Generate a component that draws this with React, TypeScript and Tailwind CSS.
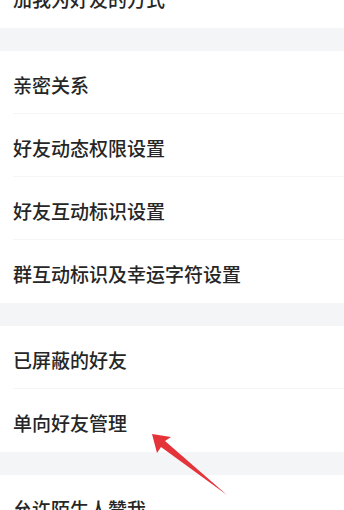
import React from 'react';

const groups: string[][] = [
  ['亲密关系', '好友动态权限设置', '好友互动标识设置', '群互动标识及幸运字符设置'],
  ['已屏蔽的好友', '单向好友管理'],
  ['允许陌生人赞我'],
];

function Row({ label, last }: { label: string; last?: boolean }) {
  return (
    <div className="relative flex h-[63px] items-center pl-[13px] pt-[3px]">
      <span className="text-[19px] font-medium leading-none text-[#262626]">{label}</span>
      {!last && <div className="absolute bottom-0 left-[13px] right-0 h-px bg-[#f6f6f6]" />}
    </div>
  );
}

export default function App() {
  return (
    <div
      className="relative h-[510px] w-[344px] overflow-hidden bg-white"
      style={{ fontFamily: '"Noto Sans CJK SC", "Noto Sans", sans-serif' }}
    >
      {/* top row, cut off by the screenshot */}
      <div className="-mt-[35px]">
        <Row label="加我为好友的方式" last />
      </div>

      {groups.map((items, gi) => (
        <div key={gi}>
          <div className="h-[23px] bg-[#f4f5f7]" />
          {items.map((label, i) => (
            <Row key={label} label={label} last={i === items.length - 1} />
          ))}
        </div>
      ))}

      {/* red annotation arrow */}
      <svg className="pointer-events-none absolute left-0 top-0" width="344" height="510">
        <polygon
          points="152,434 171,437 165,441 227,495 161,447 157,453"
          fill="#e5333a"
        />
      </svg>
    </div>
  );
}
